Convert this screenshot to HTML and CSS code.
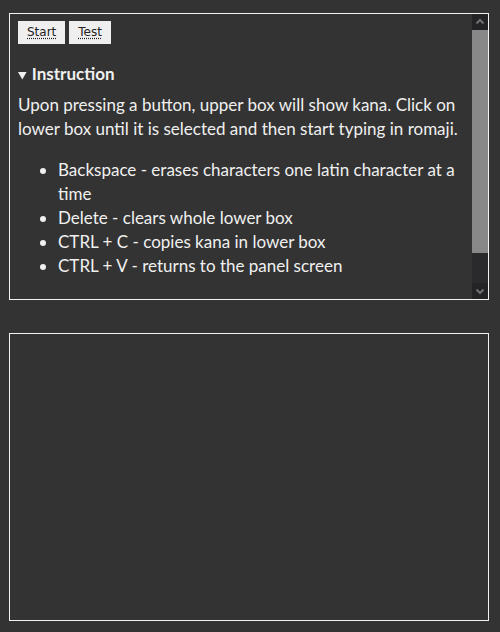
FILE: index.html
```html
<!DOCTYPE html>
<html>
<head>
<meta charset="utf-8">
<link rel="stylesheet" href="styles.css">
</head>
<body>
<div class="panel upper">
  <div class="content">
    <div class="buttons">
      <button class="btn"><span class="key">Start</span></button>
      <button class="btn"><span class="key">Test</span></button>
    </div>
    <details class="instr" open>
      <summary>Instruction</summary>
      <p>Upon pressing a button, upper box will show kana. Click on lower box until it is selected and then start typing in romaji.</p>
      <ul>
        <li>Backspace - erases characters one latin character at a time</li>
        <li>Delete - clears whole lower box</li>
        <li>CTRL + C - copies kana in lower box</li>
        <li>CTRL + V - returns to the panel screen</li>
      </ul>
    </details>
  </div>
  <div class="scrollbar">
    <div class="sb-btn">
      <svg width="16" height="16" viewBox="0 0 16 16"><path d="M4.5 9.5 L8 6 L11.5 9.5" fill="none" stroke="#6f6f73" stroke-width="2"/></svg>
    </div>
    <div class="sb-thumb"></div>
    <div class="sb-track"></div>
    <div class="sb-btn">
      <svg width="16" height="16" viewBox="0 0 16 16"><path d="M4.5 6.5 L8 10 L11.5 6.5" fill="none" stroke="#6f6f73" stroke-width="2"/></svg>
    </div>
  </div>
</div>
<div class="panel lower"></div>
</body>
</html>
```

FILE: styles.css
```css
html, body {
  margin: 0;
  background: #333333;
}
body {
  padding: 13px 11px 0 9px;
  font-family: "Lato", "Liberation Sans", sans-serif;
  color: #f0f0f0;
  font-size: 17px;
  line-height: 24px;
}
.panel {
  box-sizing: border-box;
  width: 480px;
  height: 287px;
  border: 1px solid #f2f2f2;
}
.upper {
  display: flex;
}
.content {
  flex: 1;
  overflow: hidden;
  padding: 7px 0 0 8px;
}
.scrollbar {
  width: 16px;
  display: flex;
  flex-direction: column;
}
.sb-btn {
  height: 16px;
  background: #232326;
  flex: none;
}
.sb-btn svg {
  display: block;
}
.sb-thumb {
  height: 223px;
  background: #888888;
  flex: none;
}
.sb-track {
  flex: 1;
  background: #2a2a2d;
}
.lower {
  margin-top: 33px;
  height: 288px;
}
.buttons {
  display: flex;
  gap: 4px;
}
.btn {
  height: 23px;
  padding: 0 9px;
  border: none;
  background: #efefef;
  color: #222;
  font-family: "DejaVu Sans", sans-serif;
  font-size: 12px;
  line-height: 23px;
}
.key {
  text-decoration: underline dotted;
  text-underline-offset: 2px;
}
.instr summary {
  margin-top: 18px;
  height: 24px;
  font-weight: bold;
  cursor: pointer;
}
.instr summary::marker {
  font-size: 13px;
}
.instr p {
  margin: 7px 0 0 0;
  padding-right: 8px;
}
.instr ul {
  margin: 17px 0 0 0;
  padding-left: 40px;
  padding-right: 4px;
}
```
